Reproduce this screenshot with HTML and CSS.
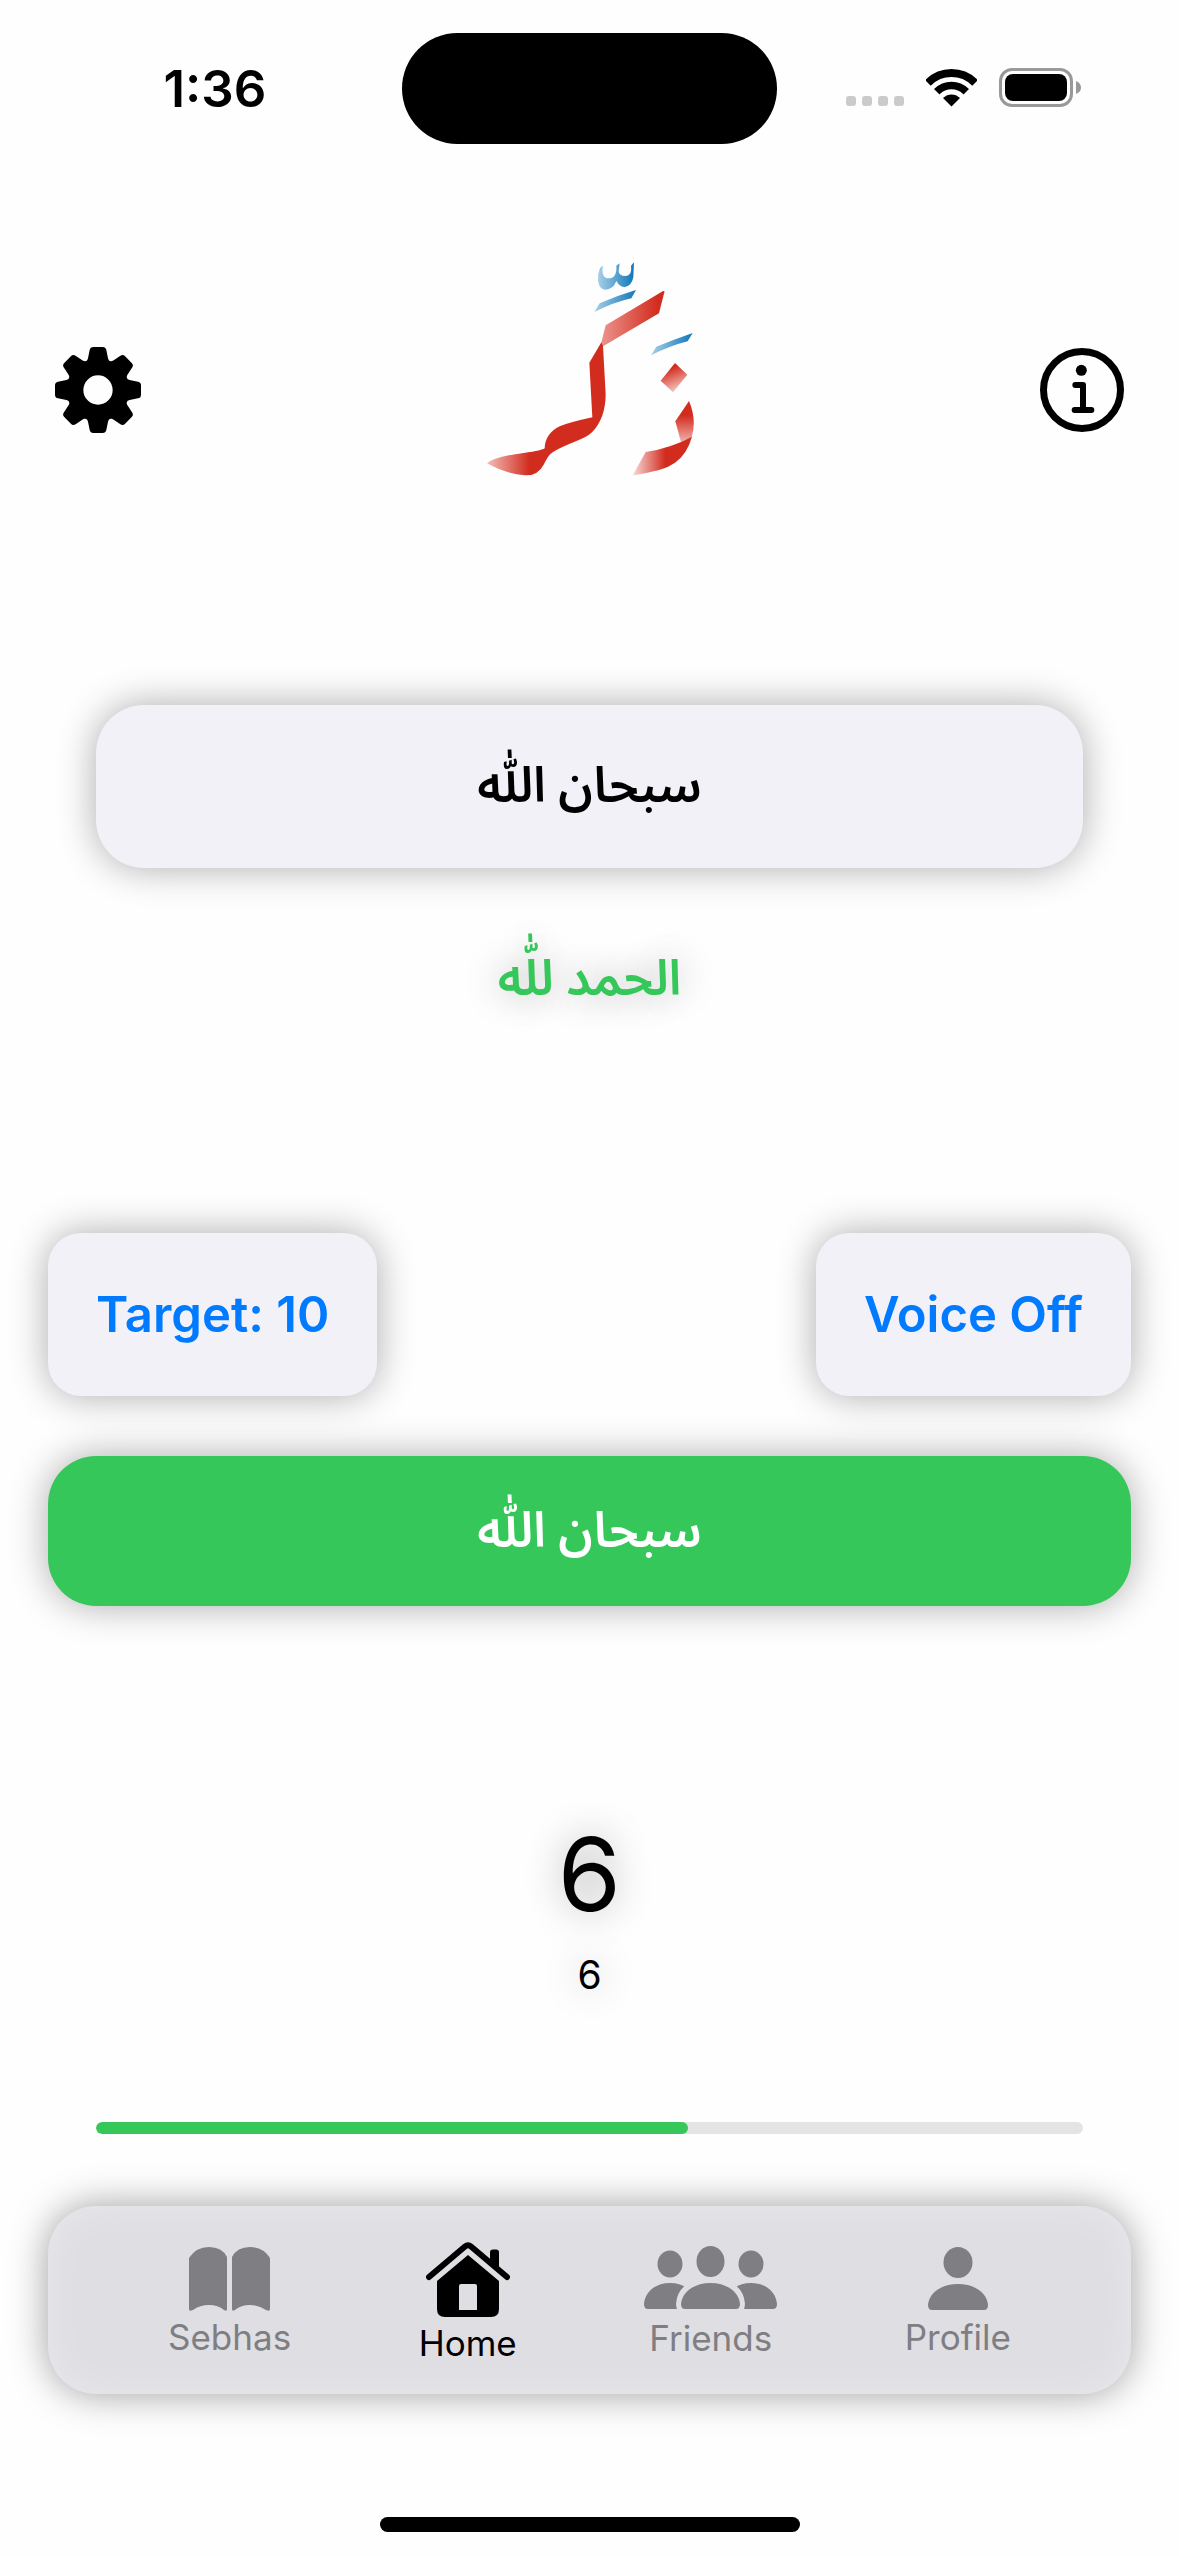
FILE: index.html
```html
<!DOCTYPE html>
<html lang="en">
<head>
<meta charset="utf-8">
<meta name="viewport" content="width=device-width, initial-scale=1">
<title>Zakker</title>
<link rel="stylesheet" href="styles.css">
</head>
<body>
<div class="screen">
  <div class="status">
    <time class="status-time">1:36</time>
    <div class="island"></div>
    <div class="status-icons">
      <svg width="58" height="11" viewBox="0 0 58 11" fill="#cbcbcb" aria-hidden="true"><rect width="10" height="10" rx="3"/><rect x="16" width="10" height="10" rx="3"/><rect x="32" width="10" height="10" rx="3"/><rect x="48" width="10" height="10" rx="3"/></svg>
      <svg width="51" height="38" viewBox="0 0 51 38" aria-hidden="true">
        <clipPath id="fan"><path d="M25.500 37.500L-15-3H66Z"/></clipPath>
        <g clip-path="url(#fan)" fill="none" stroke="#000"><circle cx="25.500" cy="37" r="33" stroke-width="8"/><circle cx="25.500" cy="37" r="20.500" stroke-width="7.500"/><circle cx="25.500" cy="37" r="11.500" fill="#000" stroke="none"/></g>
      </svg>
      <svg width="82" height="39" viewBox="0 0 82 39" aria-hidden="true"><rect x="1.500" y="1.500" width="71" height="36" rx="11.500" fill="none" stroke="#999" stroke-width="3"/><rect x="6" y="6" width="62" height="27" rx="8"/><path d="M77 13q5 2 5 6.500t-5 6.500z" fill="#999"/></svg>
    </div>
  </div>

  <header class="header">
    <button class="icon-button" aria-label="Settings">
      <svg width="86" height="86" viewBox="75 81 258 258" aria-hidden="true">
        <defs><path id="tooth" d="M164 132Q173 122 174 115L179 90Q181 81 190 81H218Q227 81 229 90L234 115Q235 122 244 132Z"/></defs>
        <circle cx="204" cy="210" r="69" fill="none" stroke="#000" stroke-width="50"/>
        <use href="#tooth"/><use href="#tooth" transform="rotate(45 204 210)"/><use href="#tooth" transform="rotate(90 204 210)"/><use href="#tooth" transform="rotate(135 204 210)"/><use href="#tooth" transform="rotate(180 204 210)"/><use href="#tooth" transform="rotate(225 204 210)"/><use href="#tooth" transform="rotate(270 204 210)"/><use href="#tooth" transform="rotate(315 204 210)"/>
      </svg>
    </button>
    <svg class="logo" width="208" height="256" viewBox="48 66 624 768" role="img" aria-label="Zakker logo">
      <defs>
        <linearGradient id="blue"><stop offset="0" stop-color="#a9cfe8"/><stop offset="1" stop-color="#0f78b9"/></linearGradient>
        <linearGradient id="arm"><stop offset="0" stop-color="#eb958e"/><stop offset=".9" stop-color="#d22c1e"/></linearGradient>
        <linearGradient id="tail"><stop offset="0" stop-color="#f2bdb9"/><stop offset=".36" stop-color="#d22c1e"/></linearGradient>
        <linearGradient id="dot" x1=".3" y1=".2" x2=".6" y2="1"><stop offset="0" stop-color="#d22c1e"/><stop offset="1" stop-color="#f6cfcb"/></linearGradient>
        <linearGradient id="neck" x1="0" y1="0" x2="0" y2="1"><stop offset=".35" stop-color="#d22c1e"/><stop offset="1" stop-color="#f0b1ac"/></linearGradient>
        <linearGradient id="foot"><stop offset="0" stop-color="#f8dcda"/><stop offset=".55" stop-color="#d22c1e"/></linearGradient>
      </defs>
      <g fill="url(#blue)">
        <path d="M489 67L480 77Q484 107 464 108Q442 107 443 92L446 70L436 77Q439 114 413 115Q389 114 396 77L387 84Q379 103 381 122Q385 149 405 149Q427 147 436 123Q446 141 461 141Q482 138 487 112Z"/>
        <path d="M370 216L386 190Q440 166 495 150L481 175Q430 186 370 216Z"/>
        <path d="M540 346L556 320Q610 298 665 279L650 304Q598 317 540 346Z"/>
      </g>
      <path fill="url(#arm)" d="M404 256L575 154Q581 151 580 157L564 220L396 319L389 315Z"/>
      <path fill="url(#tail)" d="M391 307L355 368L364 532Q300 546 268 558C238 570 221 598 221 625Q216 631 158 639Q70 650 48 670Q100 700 162 706Q200 708 218 674C232 648 234 641 262 627C310 604 340 598 363 577Q404 534 404 462L396 318Z"/>
      <path fill="url(#dot)" d="M612 369L649 404L606 457L569 422Z"/>
      <path fill="url(#neck)" d="M654 483L613 544L630 606L662 592Q678 540 654 483Z"/>
      <path fill="url(#foot)" d="M663 590Q600 624 524 636L485 706C560 693 585 686 612 668Q648 643 663 590Z"/>
    </svg>
    <button class="icon-button" aria-label="Info">
      <svg width="84" height="84" viewBox="60 84 252 252" fill="none" stroke="#000" stroke-linecap="round" stroke-linejoin="round" aria-hidden="true"><circle cx="186" cy="210" r="115.500" stroke-width="21"/><circle cx="184" cy="151" r="16.500" fill="#000" stroke="none"/><path stroke-width="18" d="M166 195H189V270M164 270H214"/></svg>
    </button>
  </header>

  <main class="main">
    <button class="card phrase" lang="ar" dir="rtl">سبحان اللّٰه</button>
    <p class="next" lang="ar" dir="rtl">الحمد للّٰه</p>
    <div class="options">
      <button class="card option">Target: 10</button>
      <button class="card option">Voice Off</button>
    </div>
    <button class="card count-button" lang="ar" dir="rtl">سبحان اللّٰه</button>
    <output class="count">6</output>
    <output class="total">6</output>
    <progress class="progress" value="6" max="10" aria-label="Progress to target">6 of 10</progress>
  </main>

  <nav class="tabs">
    <a class="tab" href="#sebhas">
      <svg width="81" height="64" viewBox="0 0 81 64" aria-hidden="true"><path d="M0 11Q7 0 20 0Q33 0 38 10V62Q38 65 35 63Q29 58 20 58Q11 58 4 63Q0 65 0 62ZM43 10Q48 0 61 0Q74 0 81 11V62Q81 65 77 63Q70 58 61 58Q52 58 46 63Q43 65 43 62Z"/></svg>
      <span>Sebhas</span>
    </a>
    <a class="tab tab-active" href="#home" aria-current="page">
      <svg width="84" height="75" viewBox="0 0 84 75" aria-hidden="true"><path d="M3 35L39 4.500Q42 2 45 4.500L81 35" fill="none" stroke="currentColor" stroke-width="6" stroke-linecap="round"/><path d="M64 20V10Q64 7.500 67 7.500H70Q73 7.500 73 10V28Z"/><path fill-rule="evenodd" d="M42 13L73 39V67Q73 75 65 75H19Q11 75 11 67V39ZM35 42Q33 42 33 44V68H51V44Q51 42 49 42Z"/></svg>
      <span>Home</span>
    </a>
    <a class="tab" href="#friends">
      <svg width="133" height="66" viewBox="0 0 133 66" aria-hidden="true">
        <mask id="gap"><path fill="#fff" d="M0 0H133V66H0Z"/><path stroke="#000" stroke-width="10" d="M37 58C38 44 50 37 66.500 37S95 44 96 58Q96 63 92 63H41Q37 63 37 58Z"/></mask>
        <g mask="url(#gap)"><path d="M0 58C1 46 11 37 26 37S52 46 53 63H4Q0 63 0 58ZM133 58C132 46 122 37 107 37S81 46 80 63H129Q133 63 133 58Z"/></g>
        <ellipse cx="26" cy="18" rx="12.500" ry="13.500"/><ellipse cx="107" cy="18" rx="12.500" ry="13.500"/><ellipse cx="66.500" cy="15.500" rx="14" ry="15.500"/>
        <path d="M37 58C38 46 50 37 66.500 37S95 46 96 58Q96 63 92 63H41Q37 63 37 58Z"/>
      </svg>
      <span>Friends</span>
    </a>
    <a class="tab" href="#profile">
      <svg width="60" height="64" viewBox="0 0 60 64" aria-hidden="true"><ellipse cx="30" cy="15.500" rx="14.500" ry="15.500"/><path d="M0 58C1 46 13 37 30 37S59 46 60 58Q60 63 56 63H4Q0 63 0 58Z"/></svg>
      <span>Profile</span>
    </a>
  </nav>
  <div class="home-indicator"></div>
</div>
</body>
</html>
```
FILE: styles.css
```css
* { box-sizing: border-box; }

body {
  margin: 0;
  background: #fefefe;
  color: #000;
  font-family: Inter, "Noto Sans Arabic", "DejaVu Sans", sans-serif;
}

button {
  margin: 0;
  border: 0;
  padding: 0;
  background: none;
  color: inherit;
  font: inherit;
}

svg { display: block; flex: none; }

.screen {
  display: flex;
  flex-direction: column;
  min-height: 100vh;
  padding-bottom: 24px;
}

/* Status bar */
.status {
  display: grid;
  grid-template-columns: 1fr 375px 1fr;
  align-items: center;
  height: 177px;
}

.status-time {
  padding-left: 28px;
  text-align: center;
  font-size: 51px;
  font-weight: 600;
}

.island {
  height: 111px;
  border-radius: 56px;
  background: #000;
}

.status-icons {
  display: flex;
  align-items: flex-end;
  gap: 22px;
  padding: 0 0 2px 69px;
}

/* Header */
.header {
  display: flex;
  align-items: center;
  justify-content: space-between;
  margin-top: 85px;
  padding: 0 55px;
}

/* Counter */
.main {
  display: flex;
  flex-direction: column;
  margin-top: 187px;
  padding: 0 48px;
}

.card {
  min-height: 163px;
  padding: 0 48px;
  border-radius: 48px;
  background: #f2f1f7;
  box-shadow: 0 0 38px rgba(0, 0, 0, 0.33);
  font-size: 49px;
  font-weight: 600;
}

.phrase { margin: 0 48px; }

.next {
  margin: 80px 0 0;
  color: #35c759;
  font-size: 49px;
  font-weight: 600;
  line-height: 60px;
  text-align: center;
  text-shadow: 0 0 38px rgba(0, 0, 0, 0.33);
}

.options {
  display: flex;
  justify-content: space-between;
  margin-top: 225px;
}

.option {
  border-radius: 33px;
  color: #007aff;
}

.count-button {
  min-height: 150px;
  margin-top: 60px;
  background: #35c759;
  color: #fff;
}

.count,
.total {
  text-align: center;
  text-shadow: 0 0 38px rgba(0, 0, 0, 0.33);
}

.count {
  margin-top: 208px;
  font-size: 102px;
  line-height: 120px;
}

.total {
  margin-top: 17px;
  font-size: 39px;
  line-height: 48px;
}

.progress {
  appearance: none;
  width: auto;
  height: 12px;
  margin: 123px 48px 0;
  border: 0;
  border-radius: 6px;
  overflow: hidden;
  background: #e4e4e4;
}

.progress::-webkit-progress-bar { background: #e4e4e4; }

.progress::-webkit-progress-value {
  border-radius: 6px;
  background: #35c759;
}

/* Tab bar */
.tabs {
  display: flex;
  align-items: center;
  justify-content: space-between;
  min-height: 188px;
  margin: 72px 48px 0;
  padding: 6px 120px 0;
  border-radius: 48px;
  background: #dfdee3;
  box-shadow: 0 0 38px rgba(0, 0, 0, 0.38), inset 0 0 40px rgba(255, 255, 255, 0.3);
}

.tab {
  display: flex;
  flex-direction: column;
  align-items: center;
  gap: 5px;
  color: #7e7e83;
  fill: currentColor;
  font-size: 35px;
  line-height: 43px;
  text-decoration: none;
}

.tab-active { color: #000; }

.home-indicator {
  width: 420px;
  height: 15px;
  margin: auto auto 0;
  border-radius: 8px;
  background: #000;
}
```
